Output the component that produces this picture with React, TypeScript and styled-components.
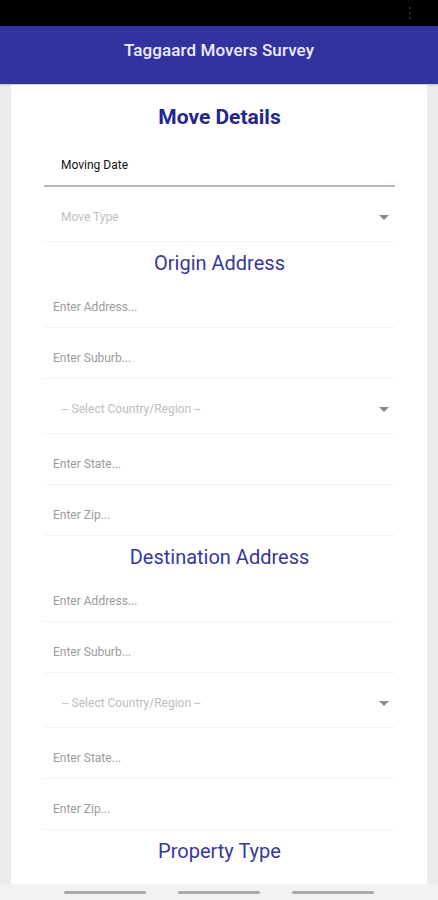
import React from "react";
import styled, { createGlobalStyle } from "styled-components";

const GlobalStyle = createGlobalStyle`
  * { box-sizing: border-box; }
  html, body { margin: 0; padding: 0; }
  body {
    font-family: Roboto, "Liberation Sans", sans-serif;
    background: #ececec;
  }
`;

const Screen = styled.div`
  width: 438px;
  height: 900px;
  display: flex;
  flex-direction: column;
  overflow: hidden;
`;
const StatusBar = styled.div`
  height: 26px;
  background: #000;
  display: flex;
  justify-content: flex-end;
  align-items: center;
  padding-right: 27px;
`;
const Dots = styled.div`
  display: flex;
  flex-direction: column;
  gap: 3px;
  span {
    width: 2px;
    height: 2px;
    border-radius: 50%;
    background: #3a3a3a;
  }
`;
const AppBar = styled.header`
  height: 58px;
  background: #33339f;
  display: flex;
  align-items: flex-start;
  justify-content: center;
  padding-top: 14px;
  line-height: 20px;
  color: #ececff;
  font-size: 17px;
  font-weight: 500;
  letter-spacing: 0.1px;
  box-shadow: 0 1px 2px rgba(0, 0, 0, 0.2);
`;
const Content = styled.main`
  flex: 1;
  overflow: hidden;
  padding: 1px 11px 0;
`;
const Card = styled.div`
  background: #fff;
  padding: 18px 32px 0 33px;
  min-height: 100%;
`;
const Heading = styled.h2<{ $main?: boolean }>`
  margin: ${(p) => (p.$main ? "0" : "7px 0 0")};
  line-height: 28px;
  text-align: center;
  font-size: ${(p) => (p.$main ? "21px" : "20px")};
  font-weight: ${(p) => (p.$main ? 700 : 400)};
  color: ${(p) => (p.$main ? "#25258f" : "#38389a")};
`;
const DateRow = styled.div`
  padding: 27px 0 13px 17px;
  line-height: 14px;
  font-size: 12px;
  color: #111;
  border-bottom: 2px solid #b4b4cf;
`;
const Row = styled.div<{ $select?: boolean; $indent?: number }>`
  display: flex;
  align-items: center;
  justify-content: space-between;
  padding: ${(p) => (p.$select ? "23px 6px 17px" : "23px 6px 13px")};
  padding-left: ${(p) => p.$indent ?? 9}px;
  line-height: 14px;
  font-size: 12px;
  color: ${(p) => (p.$select ? "#bdbdbd" : "#9b9b9b")};
  border-bottom: 1px solid #f3f3f3;
`;
const Caret = styled.span`
  width: 0;
  height: 0;
  border-left: 5px solid transparent;
  border-right: 5px solid transparent;
  border-top: 5px solid #8a8a8a;
`;
const NavBar = styled.div`
  height: 16px;
  background: #f2f2f2;
  display: flex;
  justify-content: center;
  align-items: center;
  gap: 32px;
`;
const NavLine = styled.span`
  width: 82px;
  height: 3px;
  border-radius: 2px;
  background: #a9a9a9;
`;

function AddressFields() {
  return (
    <>
      <Row>Enter Address...</Row>
      <Row>Enter Suburb...</Row>
      <Row $select $indent={18}>
        -- Select Country/Region --
        <Caret />
      </Row>
      <Row>Enter State...</Row>
      <Row>Enter Zip...</Row>
    </>
  );
}

export default function App() {
  return (
    <Screen>
      <GlobalStyle />
      <StatusBar>
        <Dots>
          <span />
          <span />
          <span />
        </Dots>
      </StatusBar>
      <AppBar>Taggaard Movers Survey</AppBar>
      <Content>
        <Card>
          <Heading $main>Move Details</Heading>
          <DateRow>Moving Date</DateRow>
          <Row $select $indent={17}>
            Move Type
            <Caret />
          </Row>
          <Heading>Origin Address</Heading>
          <AddressFields />
          <Heading>Destination Address</Heading>
          <AddressFields />
          <Heading>Property Type</Heading>
        </Card>
      </Content>
      <NavBar>
        <NavLine />
        <NavLine />
        <NavLine />
      </NavBar>
    </Screen>
  );
}
